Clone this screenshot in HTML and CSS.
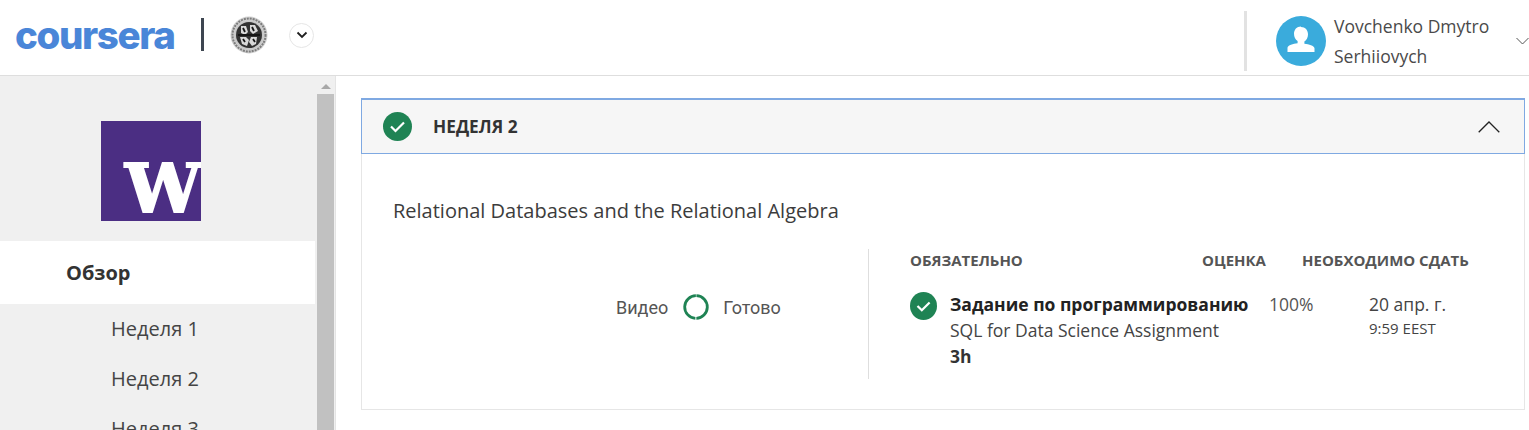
FILE: index.html
```html
<!DOCTYPE html>
<html lang="ru">
<head>
<meta charset="utf-8">
<title>Неделя 2</title>
<link rel="stylesheet" href="styles.css">
</head>
<body>
<header class="top">
  <div class="brand">coursera</div>
  <div class="brand-sep"></div>
  <svg class="seal" width="38" height="38" viewBox="0 0 38 38">
    <defs><filter id="soft"><feGaussianBlur stdDeviation="0.500"/></filter></defs>
    <g filter="url(#soft)">
      <circle cx="19" cy="19" r="18.500" fill="#cfcfcf"/>
      <circle cx="19" cy="19" r="16.500" fill="none" stroke="#7d7d7d" stroke-width="2" stroke-dasharray="2 1"/>
      <circle cx="19" cy="19" r="14.500" fill="#c8c8c8"/>
      <circle cx="19" cy="19" r="13" fill="#333"/>
      <path d="M11 10h5l2 6-3 3-4-2zM20 9h5l3 6-5 3-3-3zM10 21h6l3 3-2 6-5-2zM21 21h6l-1 7-4 2-3-4z" fill="#d9d9d9"/>
      <path d="M13 12l2 4M22 11l2 4M13 23l2 3M23 23l2 3M8 19h22" stroke="#151515" stroke-width="1.800"/>
    </g>
  </svg>
  <div class="switch">
    <svg width="12" height="8" viewBox="0 0 12 8"><path d="M1.500 1.500 6 6l4.500-4.500" fill="none" stroke="#1f1f1f" stroke-width="1.800"/></svg>
  </div>
  <div class="spacer"></div>
  <div class="user-sep"></div>
  <svg class="avatar" width="50" height="50" viewBox="0 0 50 50">
    <circle cx="25" cy="25" r="25" fill="#3aabdc"/>
    <path d="M25 10.500c-4.300 0-7 3.200-7 7.200 0 3.200 1.300 6 3.600 7.400v2.200c-4.600.5-9.600 1.700-10.100 4.400V36h27v-3.800c-.5-2.700-5.500-3.900-10.100-4.400v-2.200c2.300-1.400 3.600-4.200 3.600-7.400 0-4-2.700-7.200-7-7.200z" fill="#fff"/>
  </svg>
  <div class="user-name">Vovchenko Dmytro<br>Serhiiovych</div>
  <svg class="user-caret" width="13" height="8" viewBox="0 0 13 8"><path d="M.5 1 6.500 7l6-6" fill="none" stroke="#555" stroke-width="1"/></svg>
</header>

<div class="page">
  <aside class="side">
    <nav class="nav">
      <div class="uw"><span class="uw-w">W</span></div>
      <div class="nav-active">Обзор</div>
      <div class="nav-item">Неделя 1</div>
      <div class="nav-item">Неделя 2</div>
      <div class="nav-item">Неделя 3</div>
    </nav>
    <div class="scroll">
      <div class="scroll-up"></div>
      <div class="scroll-thumb"></div>
    </div>
  </aside>

  <main class="main">
    <section class="panel">
      <div class="panel-head">
        <svg class="check" width="29" height="29" viewBox="0 0 29 29">
          <circle cx="14.500" cy="14.500" r="14.500" fill="#1f8354"/>
          <path d="M8 14.500l4.500 4.500 8.500-8.500" fill="none" stroke="#fff" stroke-width="2.200"/>
        </svg>
        <h2 class="panel-title">НЕДЕЛЯ 2</h2>
        <svg class="panel-caret" width="22" height="12" viewBox="0 0 22 12"><path d="M.7 11.300 11 1l10.300 10.300" fill="none" stroke="#222" stroke-width="1.300"/></svg>
      </div>
      <div class="panel-body">
        <p class="lead">Relational Databases and the Relational Algebra</p>
        <div class="cols">
          <div class="col-left">
            <span class="stat">Видео</span>
            <svg class="ring" width="26" height="26" viewBox="0 0 26 26">
              <circle cx="13" cy="13" r="11.300" fill="none" stroke="#1f8354" stroke-width="2.800" stroke-dasharray="34.500 1"  transform="rotate(-88 13 13)"/>
            </svg>
            <span class="stat">Готово</span>
          </div>
          <div class="col-right">
            <div class="row heads">
              <div class="h-name">ОБЯЗАТЕЛЬНО</div>
              <div class="h-grade">ОЦЕНКА</div>
              <div class="h-due">НЕОБХОДИМО СДАТЬ</div>
            </div>
            <div class="row item">
              <svg class="check-sm" width="27" height="28" viewBox="0 0 27 28">
                <ellipse cx="13.500" cy="14" rx="13.500" ry="14" fill="#1f8354"/>
                <path d="M7.500 14l4.300 4.300 7.800-7.800" fill="none" stroke="#fff" stroke-width="2.200"/>
              </svg>
              <div class="item-main">
                <div class="item-title">Задание по программированию</div>
                <div class="item-sub">SQL for Data Science Assignment</div>
                <div class="item-time">3h</div>
              </div>
              <div class="item-grade">100%</div>
              <div class="item-due">
                <div class="due-date">20 апр. г.</div>
                <div class="due-time">9:59 EEST</div>
              </div>
            </div>
          </div>
        </div>
      </div>
    </section>
  </main>
</div>
</body>
</html>
```

FILE: styles.css
```css
* { box-sizing: border-box; }
html, body { margin: 0; height: 430px; overflow: hidden; background: #fff; }
body { font-family: "Open Sans", "Liberation Sans", sans-serif; color: #3c3c3c; }

.top { height: 76px; display: flex; align-items: center; border-bottom: 1px solid #dedede; padding-left: 15px; }
.brand { width: 160px; font-family: "Inter", sans-serif; font-weight: 800; font-size: 38.500px; letter-spacing: -1.400px; line-height: 40px; color: #4a86d8; margin-top: -6px; white-space: nowrap; }
.brand-sep { width: 3px; height: 33px; background: #3e4651; margin: -6px 0 0 26px; }
.seal { margin: -6px 0 0 26px; }
.switch { width: 25px; height: 25px; border: 1px solid #e6e6e6; border-radius: 50%; display: flex; align-items: center; justify-content: center; margin: -5px 0 0 21px; }
.spacer { flex: 1; }
.user-sep { width: 3px; height: 60px; background: #e2e2e2; margin-top: 7px; }
.avatar { margin: 7px 0 0 29px; }
.user-name { width: 182px; margin: 7px 0 0 8px; font-size: 17.500px; line-height: 30px; color: #4a4a4a; white-space: nowrap; }
.user-caret { margin-top: 7px; flex: none; }

.page { display: flex; height: 354px; }
.side { width: 336px; flex: none; display: flex; background: #f0f0f0; border-right: 1px solid #e4e4e4; overflow: hidden; }
.nav { width: 317px; flex: none; padding-top: 45px; }
.uw { width: 100px; height: 100px; margin: 0 0 20px 101px; background: #4b2e83; overflow: hidden; padding: 27px 0 0 24px; }
.uw-w { display: block; font-family: "DejaVu Serif", serif; font-weight: 700; font-size: 68px; line-height: 80px; color: #fff; -webkit-text-stroke: 2px #fff; white-space: nowrap; }
.nav-active { width: 315px; height: 63px; background: #fff; padding-left: 66px; font-weight: 700; font-size: 20px; line-height: 63px; color: #333; }
.nav-item { height: 50px; padding-left: 111px; font-size: 20px; line-height: 50px; color: #444; }
.scroll { width: 17px; flex: none; background: #f0f0f0; }
.scroll-up { width: 0; height: 0; margin: 8px auto 5px; border: 5px solid transparent; border-top: 0; border-bottom: 5px solid #a8a8a8; }
.scroll-thumb { height: 340px; background: #c1c1c1; }

.main { flex: 1; padding: 22px 4px 0 25px; }
.panel { height: 312px; border: 1px solid #e6e6e6; border-top: 0; }
.panel-head { height: 56px; margin: 0 -1px; display: flex; align-items: center; background: #f6f6f6; border: 1px solid #7fa9e2; border-top-width: 2px; padding: 0 24px 0 21px; }
.panel-title { margin: 0 0 0 21px; flex: 1; font-size: 17.300px; font-weight: 700; color: #333; }
.panel-caret { flex: none; }
.panel-body { padding: 0 0 0 31px; }
.lead { margin: 0; padding-top: 43px; font-size: 20px; line-height: 27px; color: #3c3c3c; height: 95px; }
.cols { display: flex; height: 130px; }
.col-left { width: 475px; display: flex; align-items: center; padding: 0 0 14px 223px; }
.stat { font-family: "Roboto", sans-serif; font-size: 18px; color: #555; }
.ring { margin: 0 14px 0 15px; }
.col-right { flex: 1; border-left: 1px solid #dedede; padding-left: 41px; }
.row { display: flex; }
.heads { height: 43px; font-size: 15px; font-weight: 700; line-height: 22px; color: #555; }
.h-name { width: 292px; }
.h-grade { width: 100px; }
.item { align-items: flex-start; }
.check-sm { flex: none; }
.item-main { width: 319px; margin: -1px 0 0 13px; }
.item-title { font-size: 17.500px; font-weight: 700; line-height: 26px; color: #222; white-space: nowrap; }
.item-sub { font-size: 17.500px; line-height: 26px; color: #444; }
.item-time { font-size: 17.500px; font-weight: 700; line-height: 27px; color: #333; }
.item-grade { width: 100px; margin-top: -1px; font-size: 17.500px; line-height: 26px; color: #555; }
.item-due { margin-top: -1px; }
.due-date { font-size: 17.500px; line-height: 26px; color: #444; }
.due-time { font-size: 15px; line-height: 22px; color: #444; }
```
